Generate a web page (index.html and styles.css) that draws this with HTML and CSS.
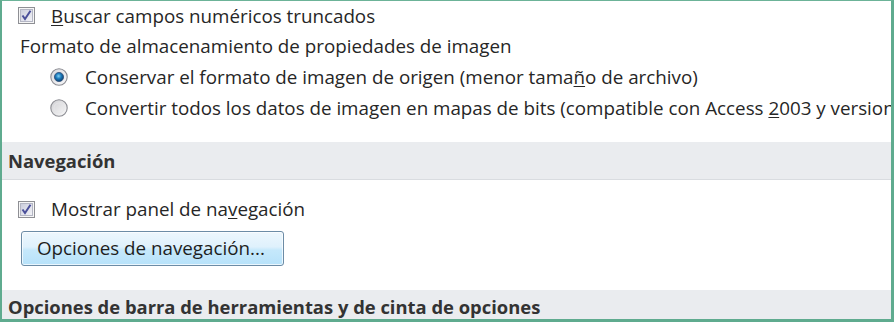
FILE: index.html
```html
<!DOCTYPE html>
<html lang="es">
<head>
<meta charset="utf-8">
<link rel="stylesheet" href="styles.css">
</head>
<body>
<div class="frame">
  <div class="row row1 check-row">
    <svg class="checkbox" width="17" height="17" viewBox="0 0 17 17">
      <defs>
        <linearGradient id="cbg" x1="0" y1="0" x2="1" y2="1">
          <stop offset="0" stop-color="#c9ccdc"/>
          <stop offset="1" stop-color="#f4f4f8"/>
        </linearGradient>
      </defs>
      <rect x="0.5" y="0.5" width="16" height="16" fill="#f6f6f6" stroke="#8e8f94"/>
      <rect x="2.5" y="2.5" width="12" height="12" fill="url(#cbg)" stroke="#b4b6c4"/>
      <path d="M4.5 8.5 L7 12 L12.5 3.8" fill="none" stroke="#4a4f9a" stroke-width="2"/>
    </svg>
    <span class="label"><u>B</u>uscar campos numéricos truncados</span>
  </div>
  <div class="row row2">Formato de almacenamiento de propiedades de imagen</div>
  <div class="row row3 radio-row">
    <svg class="radio" width="18" height="18" viewBox="0 0 18 18">
      <defs>
        <radialGradient id="rsel" cx="0.45" cy="0.4" r="0.6">
          <stop offset="0" stop-color="#7fd0f5"/>
          <stop offset="0.5" stop-color="#1a78b8"/>
          <stop offset="1" stop-color="#0c3f6e"/>
        </radialGradient>
        <linearGradient id="rring" x1="0" y1="0" x2="1" y2="1">
          <stop offset="0" stop-color="#d8d8dc"/>
          <stop offset="1" stop-color="#f8f8fa"/>
        </linearGradient>
      </defs>
      <circle cx="9" cy="9" r="8.2" fill="url(#rring)" stroke="#8b8c92" stroke-width="1.1"/>
      <circle cx="9" cy="9" r="4.6" fill="url(#rsel)" stroke="#32507a" stroke-width="0.8"/>
    </svg>
    <span class="label">Conservar el formato de imagen de origen (menor tama<u>ñ</u>o de archivo)</span>
  </div>
  <div class="row row4 radio-row">
    <svg class="radio" width="18" height="18" viewBox="0 0 18 18">
      <defs>
        <linearGradient id="runs" x1="0" y1="0" x2="1" y2="1">
          <stop offset="0" stop-color="#cfcfd3"/>
          <stop offset="1" stop-color="#fafafa"/>
        </linearGradient>
      </defs>
      <circle cx="9" cy="9" r="8.2" fill="url(#runs)" stroke="#8b8c92" stroke-width="1.1"/>
      <circle cx="9" cy="9" r="5" fill="none" stroke="#e6e6e8" stroke-width="0.8"/>
    </svg>
    <span class="label">Convertir todos los datos de imagen en mapas de bits (compatible con Access <u>2</u>003 y versiones anteriores)</span>
  </div>
  <div class="section">Navegación</div>
  <div class="row row5 check-row">
    <svg class="checkbox" width="17" height="17" viewBox="0 0 17 17">
      <defs>
        <linearGradient id="cbg2" x1="0" y1="0" x2="1" y2="1">
          <stop offset="0" stop-color="#c9ccdc"/>
          <stop offset="1" stop-color="#f4f4f8"/>
        </linearGradient>
      </defs>
      <rect x="0.5" y="0.5" width="16" height="16" fill="#f6f6f6" stroke="#8e8f94"/>
      <rect x="2.5" y="2.5" width="12" height="12" fill="url(#cbg2)" stroke="#b4b6c4"/>
      <path d="M4.5 8.5 L7 12 L12.5 3.8" fill="none" stroke="#4a4f9a" stroke-width="2"/>
    </svg>
    <span class="label">Mostrar panel de na<u>v</u>egación</span>
  </div>
  <div class="btn-row">
    <button class="btn" type="button">Opciones de navegación...</button>
  </div>
  <div class="section section2">Opciones de barra de herramientas y de cinta de opciones</div>
</div>
</body>
</html>
```
FILE: styles.css
```css
html, body {
  margin: 0;
  padding: 0;
  background: #ffffff;
}
.frame {
  width: 894px;
  height: 322px;
  box-sizing: border-box;
  border-top: 1px solid #6cb398;
  border-left: 2px solid #5fab8f;
  border-right: 3px solid #5fab8f;
  border-bottom: 3px solid #5fab8f;
  overflow: hidden;
  font-family: "Open Sans", "Noto Sans", sans-serif;
  font-size: 18.8px;
  color: #262626;
  background: #ffffff;
  display: flex;
  flex-direction: column;
}
.row {
  display: flex;
  align-items: center;
  white-space: nowrap;
}
.row1 { height: 30px; padding-left: 16px; }
.row2 { height: 32px; padding-left: 18px; }
.row3 { height: 31px; padding-left: 48px; }
.row4 { height: 33px; padding-left: 48px; }
.row4 .label { overflow: hidden; }
.row5 { height: 30px; margin-top: 14px; padding-left: 16px; }
.check-row .checkbox { margin-right: 16px; flex: none; }
.radio-row .radio { margin-right: 17px; flex: none; }
u { text-decoration: underline; text-underline-offset: 2px; }
.section {
  margin-top: 18px;
  height: 39px;
  box-sizing: border-box;
  background: #eaecef;
  border-bottom: 1px solid #d9dce0;
  font-weight: 700;
  font-size: 18.4px;
  color: #333333;
  display: flex;
  align-items: center;
  padding-left: 6px;
  white-space: nowrap;
}
.btn-row {
  padding-left: 19px;
  margin-top: 7px;
  display: flex;
}
.btn {
  width: 263px;
  height: 35px;
  border: 1px solid #6c8ca6;
  border-radius: 3px;
  background: linear-gradient(#edf7fd 0%, #dff1fc 45%, #c5e8fb 55%, #b7e2fa 100%);
  box-shadow: inset 0 0 0 1px rgba(255,255,255,0.7);
  font-family: inherit;
  font-size: 18.8px;
  color: #1e1e1e;
  padding: 0 0 0 15px;
  text-align: left;
}
.section2 {
  margin-top: 24px;
  height: 30px;
  border-bottom: none;
  align-items: flex-end;
  padding-bottom: 0;
}
```
